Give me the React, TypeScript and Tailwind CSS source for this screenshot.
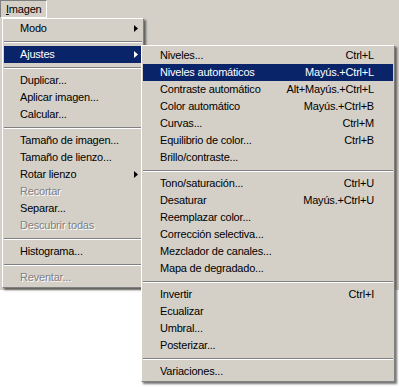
import React from "react";

type Item =
  | { sep: true }
  | {
      sep?: false;
      label: string;
      shortcut?: string;
      sub?: boolean;
      active?: boolean;
      disabled?: boolean;
    };

// Imagen menu
const imageMenu: Item[] = [
  { label: "Modo", sub: true },
  { sep: true },
  { label: "Ajustes", sub: true, active: true },
  { sep: true },
  { label: "Duplicar..." },
  { label: "Aplicar imagen..." },
  { label: "Calcular..." },
  { sep: true },
  { label: "Tamaño de imagen..." },
  { label: "Tamaño de lienzo..." },
  { label: "Rotar lienzo", sub: true },
  { label: "Recortar", disabled: true },
  { label: "Separar..." },
  { label: "Descubrir todas", disabled: true },
  { sep: true },
  { label: "Histograma..." },
  { sep: true },
  { label: "Reventar...", disabled: true },
];

// Ajustes submenu
const adjustMenu: Item[] = [
  { label: "Niveles...", shortcut: "Ctrl+L" },
  { label: "Niveles automáticos", shortcut: "Mayús.+Ctrl+L", active: true },
  { label: "Contraste automático", shortcut: "Alt+Mayús.+Ctrl+L" },
  { label: "Color automático", shortcut: "Mayús.+Ctrl+B" },
  { label: "Curvas...", shortcut: "Ctrl+M" },
  { label: "Equilibrio de color...", shortcut: "Ctrl+B" },
  { label: "Brillo/contraste..." },
  { sep: true },
  { label: "Tono/saturación...", shortcut: "Ctrl+U" },
  { label: "Desaturar", shortcut: "Mayús.+Ctrl+U" },
  { label: "Reemplazar color..." },
  { label: "Corrección selectiva..." },
  { label: "Mezclador de canales..." },
  { label: "Mapa de degradado..." },
  { sep: true },
  { label: "Invertir", shortcut: "Ctrl+I" },
  { label: "Ecualizar" },
  { label: "Umbral..." },
  { label: "Posterizar..." },
  { sep: true },
  { label: "Variaciones..." },
];

function Arrow({ white }: { white?: boolean }) {
  return (
    <svg width="4" height="7" viewBox="0 0 4 7">
      <path d="M0 0L4 3.5L0 7Z" fill={white ? "#ffffff" : "#000000"} />
    </svg>
  );
}

function MenuList({ items, padLeft, padRight }: { items: Item[]; padLeft: string; padRight: string }) {
  return (
    <>
      {items.map((it, i) =>
        it.sep ? (
          <div key={i} className="h-[9px] flex flex-col justify-center">
            <div className="h-[2px] border-t border-[#808080] border-b border-b-white" />
          </div>
        ) : (
          <div
            key={i}
            className={`h-[17px] flex items-center ${padLeft} ${padRight} ${
              it.active ? "bg-[#0a246a] text-white" : it.disabled ? "text-[#808080] [text-shadow:1px_1px_0_#ffffff]" : "text-black"
            }`}
          >
            <span className="flex-1 whitespace-nowrap">{it.label}</span>
            {it.shortcut && <span className="whitespace-nowrap">{it.shortcut}</span>}
            {it.sub && <Arrow white={it.active} />}
          </div>
        )
      )}
    </>
  );
}

export default function App() {
  return (
    <div className="relative w-[399px] h-[387px] overflow-hidden bg-white text-[11px] tracking-[-0.2px] font-['Liberation_Sans',Arial,sans-serif]">
      {/* app window area */}
      <div className="h-[290px] bg-[#d4d0c8]">
        <div className="h-[18px] flex">
          <div className="w-[47px] h-[18px] border-t border-l border-[#808080] border-r border-r-white border-b border-b-white flex items-center pl-[5px]">
            <span>
              <span className="underline">I</span>magen
            </span>
          </div>
        </div>
      </div>

      {/* Imagen menu */}
      <div className="absolute left-[2px] top-[18px] w-[142px] p-[1px] bg-[#d4d0c8] border-t border-l border-white border-r border-b border-r-[#808080] border-b-[#808080] shadow-[2px_2px_2px_rgba(0,0,0,0.55)]">
        <MenuList items={imageMenu} padLeft="pl-[16px]" padRight="pr-[4px]" />
      </div>

      {/* Ajustes submenu */}
      <div className="absolute left-[141px] top-[45px] w-[254px] p-[1px] bg-[#d4d0c8] border-t border-l border-white border-r border-b border-r-[#808080] border-b-[#808080] shadow-[2px_2px_2px_rgba(0,0,0,0.55)]">
        <MenuList items={adjustMenu} padLeft="pl-[17px]" padRight="pr-[19px]" />
      </div>
    </div>
  );
}
